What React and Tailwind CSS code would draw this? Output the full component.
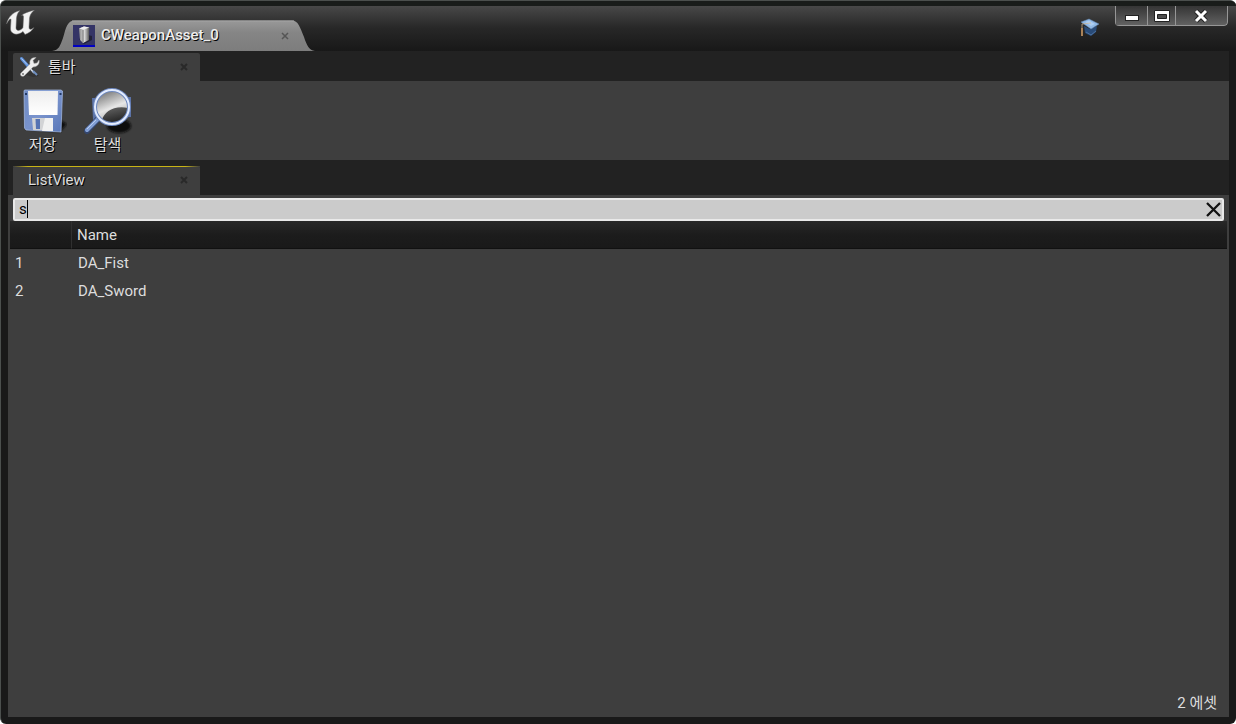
import React, { useState } from "react";

const ASSETS = ["DA_Fist", "DA_Sword"];

const TEXT_SHADOW = "[text-shadow:1px_1px_0_#000]";

const UnrealLogo = () => (
  <svg width="30" height="28" viewBox="0 0 30 28" aria-hidden="true">
    <path
      d="M0.500 14C2 7 7 2 14 0.500C11.500 3 11 5 10.500 8L10 18C10 20 12 21 14 20C16 19 17 18 17 17L17.500 7C17.500 5.500 17 5 15.500 5.500C18 3 23 1.500 28.500 0C25 3 24 5 23.500 8L23 17C23 20 25 20 28 17.500C26 21 23 23 19 24.500L17 21.500C14 24 10 25 7.500 23.500C5 22 4.500 21 4.500 18L5 10C5 7.500 2.500 10 0.500 14Z"
      fill="#f2f2f2"
      stroke="#666"
      strokeWidth="0.5"
    />
  </svg>
);

const AssetIcon = () => (
  <svg width="22" height="22" viewBox="0 0 22 22" className="shrink-0" aria-hidden="true">
    <defs>
      <linearGradient id="block" x1="0" x2="1">
        <stop offset="0" stopColor="#8a8a8a" />
        <stop offset="0.35" stopColor="#c4c4c4" />
        <stop offset="0.5" stopColor="#dedede" />
        <stop offset="0.75" stopColor="#9a9a9a" />
        <stop offset="1" stopColor="#4c4c4c" />
      </linearGradient>
    </defs>
    <rect width="22" height="22" fill="#343466" />
    <path d="M6 14L11 19L19 15V11L15 10Z" fill="#1c1c2c" opacity="0.8" />
    <path d="M6 3.500L11 1.500L16.500 2.500L16 15L10 18L7 15Z" fill="url(#block)" />
    <path d="M6 3.500L11 1.500L16.500 2.500L10.500 4.500Z" fill="#eee" />
    <path d="M10 5V17" stroke="#777" />
    <rect y="20" width="22" height="2" fill="#0000c4" />
  </svg>
);

const TutorialIcon = () => (
  <svg width="20" height="20" viewBox="0 0 20 20" aria-hidden="true">
    <path d="M4 8L10 11L17 8L16 14L11 18L5 15Z" fill="#294b78" />
    <path d="M6 14L11 17L16 13" stroke="#4c719f" fill="none" />
    <path d="M1 4L9 1L19 6L11 11Z" fill="#91b9e6" stroke="#6286b0" strokeWidth="0.5" />
    <path d="M5 4L9 2.500L15 6L11 8Z" fill="#b8d5f5" opacity="0.7" />
    <path d="M11 5L2 6V12" stroke="#d3b58c" strokeWidth="0.7" fill="none" />
    <path d="M2 10V18" stroke="#aa8258" strokeWidth="2" />
  </svg>
);

const ToolsIcon = () => (
  <svg width="22" height="22" viewBox="0 0 22 22" aria-hidden="true">
    <path d="M7 19L13 14L20 20L14 21Z" fill="#222" opacity="0.4" />
    <path d="M2.500 2.500L9 10" stroke="#5d8fd8" strokeWidth="3" strokeLinecap="round" />
    <path d="M2.500 2.500L8 8.500" stroke="#b1cdf5" strokeWidth="1" />
    <path d="M9 10L15 17" stroke="#dce6f5" strokeWidth="1.500" />
    <path d="M14 15L18 19" stroke="#7090c0" strokeWidth="2" />
    <path
      d="M2 17L11 8C10 4 13 1 17 1.500L14 4.500L15 7.500L18 7L20 4C21 8 18 11 14 11L5 20C2.500 21 0.500 19 2 17Z"
      fill="#eeeeee"
      stroke="#aaa"
      strokeWidth="0.5"
    />
    <circle cx="4" cy="18" r="1" fill="#777" />
  </svg>
);

const SaveIcon = () => (
  <svg width="48" height="48" viewBox="0 0 48 48" aria-hidden="true">
    <defs>
      <linearGradient id="disk" x1="0" x2="1" y2="1">
        <stop offset="0" stopColor="#6e8ac2" />
        <stop offset="0.5" stopColor="#7993cd" />
        <stop offset="1" stopColor="#5876b7" />
      </linearGradient>
      <linearGradient id="label" x2="0" y2="1">
        <stop offset="0" stopColor="#eee" />
        <stop offset="1" stopColor="#fff" />
      </linearGradient>
      <filter id="soft">
        <feGaussianBlur stdDeviation="1.2" />
      </filter>
    </defs>
    <path d="M6 42L41 45L48 37L39 32Z" fill="#111" filter="url(#soft)" />
    <path d="M5 4Q5 3 6 3H42L43.500 4L42 45L7 43L5.500 41Z" fill="url(#disk)" stroke="#a9bee7" strokeWidth="0.7" />
    <path d="M9 4H39L38.500 28H10Z" fill="url(#label)" />
    <path d="M13 31H34V44L14 43Z" fill="#d2d3d5" />
    <path d="M26 31H34V44H23Z" fill="#f1f1f1" />
    <path d="M16.500 32H21V42H17Z" fill="#5673b3" />
    <path d="M6 6H8V8H6ZM40.500 6H42.500V8H40.500Z" fill="#233a66" />
  </svg>
);

const BrowseIcon = () => (
  <svg width="50" height="48" viewBox="0 0 50 48" aria-hidden="true">
    <defs>
      <linearGradient id="lens" x1="0.2" y1="0" x2="0.6" y2="1">
        <stop offset="0" stopColor="#6a6a6a" />
        <stop offset="0.55" stopColor="#e6e6e6" />
        <stop offset="1" stopColor="#999" />
      </linearGradient>
      <linearGradient id="lensDark" x2="0.4" y2="1">
        <stop offset="0" stopColor="#6a6a6a" />
        <stop offset="1" stopColor="#242424" />
      </linearGradient>
      <filter id="lensSoft">
        <feGaussianBlur stdDeviation="1.2" />
      </filter>
    </defs>
    <ellipse cx="36" cy="39" rx="12" ry="7" fill="#101010" filter="url(#lensSoft)" />
    <path d="M9 11L48 10V30L10 33Z" fill="#5c73a7" />
    <path d="M15 32L4 44" stroke="#34466d" strokeWidth="6" strokeLinecap="round" />
    <path d="M15 32L4 43" stroke="#829fd5" strokeWidth="4" strokeLinecap="round" />
    <path d="M13 33L4 42" stroke="#b9cdef" strokeWidth="1" />
    <circle cx="29" cy="20" r="17" fill="url(#lens)" />
    <path d="M19 33C21 25 31 18 45 21C45 30 37 37 28 36C24 36 21 35 19 33Z" fill="url(#lensDark)" />
    <circle cx="29" cy="20" r="17" fill="none" stroke="#6d87bd" strokeWidth="4" />
    <circle cx="29" cy="20" r="17" fill="none" stroke="#e3ecff" strokeWidth="2" />
  </svg>
);

const TabClose = ({ label, light }) => (
  <button type="button" aria-label={label} className="flex h-4 w-4 items-center justify-center">
    <svg width="8" height="8" viewBox="0 0 8 8" aria-hidden="true">
      <path
        d="M1 1L7 7M7 1L1 7"
        stroke={light ? "#555" : "#292929"}
        strokeWidth={light ? "1.5" : "2"}
      />
    </svg>
  </button>
);

const WindowButton = ({ label, className, children }) => (
  <button
    type="button"
    aria-label={label}
    className={`flex h-5 items-center justify-center border-r border-b border-[#969696] bg-linear-to-b from-[#353535] to-[#626262] ${className}`}
  >
    {children}
  </button>
);

const TitleBar = () => (
  <header className="flex h-[50px] items-start border-t-5 border-[#191c1a] bg-linear-to-b from-[#484848] via-[#272727] to-[#181818] pr-2 pl-[5px]">
    <div className="pt-1">
      <UnrealLogo />
    </div>
    <div className="relative ml-4 flex h-[31px] w-[263px] items-center self-end pr-[22px] pl-[21px]">
      <svg
        className="absolute inset-0 h-full w-full"
        viewBox="0 0 263 31"
        preserveAspectRatio="none"
        aria-hidden="true"
      >
        <defs>
          <linearGradient id="tab" x2="0" y2="1">
            <stop offset="0" stopColor="#999" />
            <stop offset="0.4" stopColor="#858585" />
            <stop offset="1" stopColor="#7d7d7d" />
          </linearGradient>
        </defs>
        <path
          d="M0 31C7 30 8 26 11 18C14 8 15 0.500 23 0.500H240C246 0.500 248 7 252 17C255 26 257 30 263 31Z"
          fill="url(#tab)"
        />
        <path d="M20 1H242" stroke="#a4a4a4" />
      </svg>
      <div className="relative flex w-full items-center">
        <AssetIcon />
        <span className={`ml-[6px] grow text-[15px] font-medium text-[#eee] ${TEXT_SHADOW}`}>
          CWeaponAsset_0
        </span>
        <TabClose label="Close CWeaponAsset_0" light />
      </div>
    </div>
    <button type="button" aria-label="Tutorials" className="mt-3 mr-[15px] ml-auto">
      <TutorialIcon />
    </button>
    <div className="flex overflow-hidden rounded-b-sm border-l border-[#969696]">
      <WindowButton label="Minimize" className="w-8">
        <svg width="14" height="14" viewBox="0 0 14 14" aria-hidden="true">
          <rect x="0.500" y="6.500" width="13" height="5" fill="#fff" stroke="#222" />
        </svg>
      </WindowButton>
      <WindowButton label="Maximize" className="w-7">
        <svg width="16" height="14" viewBox="0 0 16 14" aria-hidden="true">
          <path
            d="M0.500 1.500H15.500V12.500H0.500ZM3.500 5.500V9.500H12.500V5.500Z"
            fill="#fff"
            fillRule="evenodd"
            stroke="#222"
          />
        </svg>
      </WindowButton>
      <WindowButton label="Close" className="w-[52px] rounded-br-sm">
        <svg width="16" height="14" viewBox="0 0 16 14" aria-hidden="true">
          <path d="M2 2L12 12M12 2L2 12" stroke="#222" strokeWidth="5" />
          <path d="M2 2L12 12M12 2L2 12" stroke="#fff" strokeWidth="3" />
        </svg>
      </WindowButton>
    </div>
  </header>
);

const ToolButton = ({ icon, label }) => (
  <button type="button" className="flex w-[65px] flex-col items-center">
    {icon}
    <span className={`text-[15px] leading-5 text-[#ddd] ${TEXT_SHADOW}`}>{label}</span>
  </button>
);

export default function App() {
  const [query, setQuery] = useState("s");
  const items = ASSETS.filter((name) => name.toLowerCase().includes(query.toLowerCase()));

  return (
    <div className="min-h-screen bg-white font-['Roboto','Noto_Sans_CJK_KR',sans-serif] text-[15px] text-[#ddd]">
      <div className="flex min-h-screen flex-col overflow-hidden rounded-md border-t border-l border-[#4b4f4d] bg-[#191919]">
        <TitleBar />

        <main className="mr-[7px] mb-[7px] ml-[7px] flex grow flex-col bg-[#222]">
          {/* Toolbar */}
          <div className="flex h-[30px] items-end pl-[5px]">
            <div className="flex h-7 w-[187px] items-center rounded-t-xs bg-[#3e3e3e] pr-2 pl-[6px]">
              <ToolsIcon />
              <span className={`ml-[7px] grow text-[15px] leading-5 ${TEXT_SHADOW}`}>툴바</span>
              <TabClose label="Close 툴바" />
            </div>
          </div>
          <div className="flex h-[79px] items-start bg-[#3e3e3e] pt-[6px] pl-[2px]">
            <ToolButton icon={<SaveIcon />} label="저장" />
            <ToolButton icon={<BrowseIcon />} label="탐색" />
          </div>

          {/* List view */}
          <div className="flex h-[35px] items-end pl-[5px]">
            <div className="flex h-[29px] w-[187px] flex-col rounded-t-xs bg-[#3e3e3e]">
              <div className="h-px shrink-0 bg-[linear-gradient(90deg,#3e3e3e,#c8b416_8%,#c8b416_92%,#3e3e3e)]" />
              <div className="flex grow items-center justify-between pr-2 pb-[2px] pl-[15px]">
                <span className={`leading-5 ${TEXT_SHADOW}`}>ListView</span>
                <TabClose label="Close ListView" />
              </div>
            </div>
          </div>
          <section className="flex grow flex-col bg-[#3e3e3e] px-[2px] pt-[3px]">
            <div className="relative mr-[3px] ml-[3px] flex h-[23px] items-center rounded-xs border-2 border-[#e9e9e9] bg-[#cbcbcb]">
              <input
                type="text"
                aria-label="Search"
                value={query}
                onChange={(e) => setQuery(e.target.value)}
                className="h-[18px] min-w-0 grow bg-transparent pb-px pl-1 text-[15px] text-black caret-transparent outline-none"
              />
              <span className="absolute top-0 left-3 h-[18px] w-px bg-black" />
              <button
                type="button"
                aria-label="Clear search"
                onClick={() => setQuery("")}
                className="flex w-[18px] justify-center"
              >
                <svg width="16" height="16" viewBox="0 0 16 16" aria-hidden="true">
                  <path d="M2 1L15 14M15 1L2 14" stroke="#111" strokeWidth="2.300" />
                </svg>
              </button>
            </div>
            <table className="w-full table-fixed border-separate border-spacing-0 text-left">
              <thead>
                <tr className="h-7 bg-linear-to-b from-[#282828] via-[#1c1c1c] to-[#191919]">
                  <th className="w-[62px] border-r border-b border-r-[#303030] border-b-[#111] p-0" aria-label="Index" />
                  <th className="border-b border-[#111] p-0 pt-px pl-[5px] font-normal">Name</th>
                </tr>
              </thead>
              <tbody>
                {items.map((name, i) => (
                  <tr key={name} className="h-7">
                    <td className="p-0 pl-[5px]">{i + 1}</td>
                    <td className="p-0 pl-[6px]">{name}</td>
                  </tr>
                ))}
              </tbody>
            </table>
            <p className="mt-auto pr-[10px] pb-1 text-right leading-5">{items.length} 에셋</p>
          </section>
        </main>
      </div>
    </div>
  );
}
